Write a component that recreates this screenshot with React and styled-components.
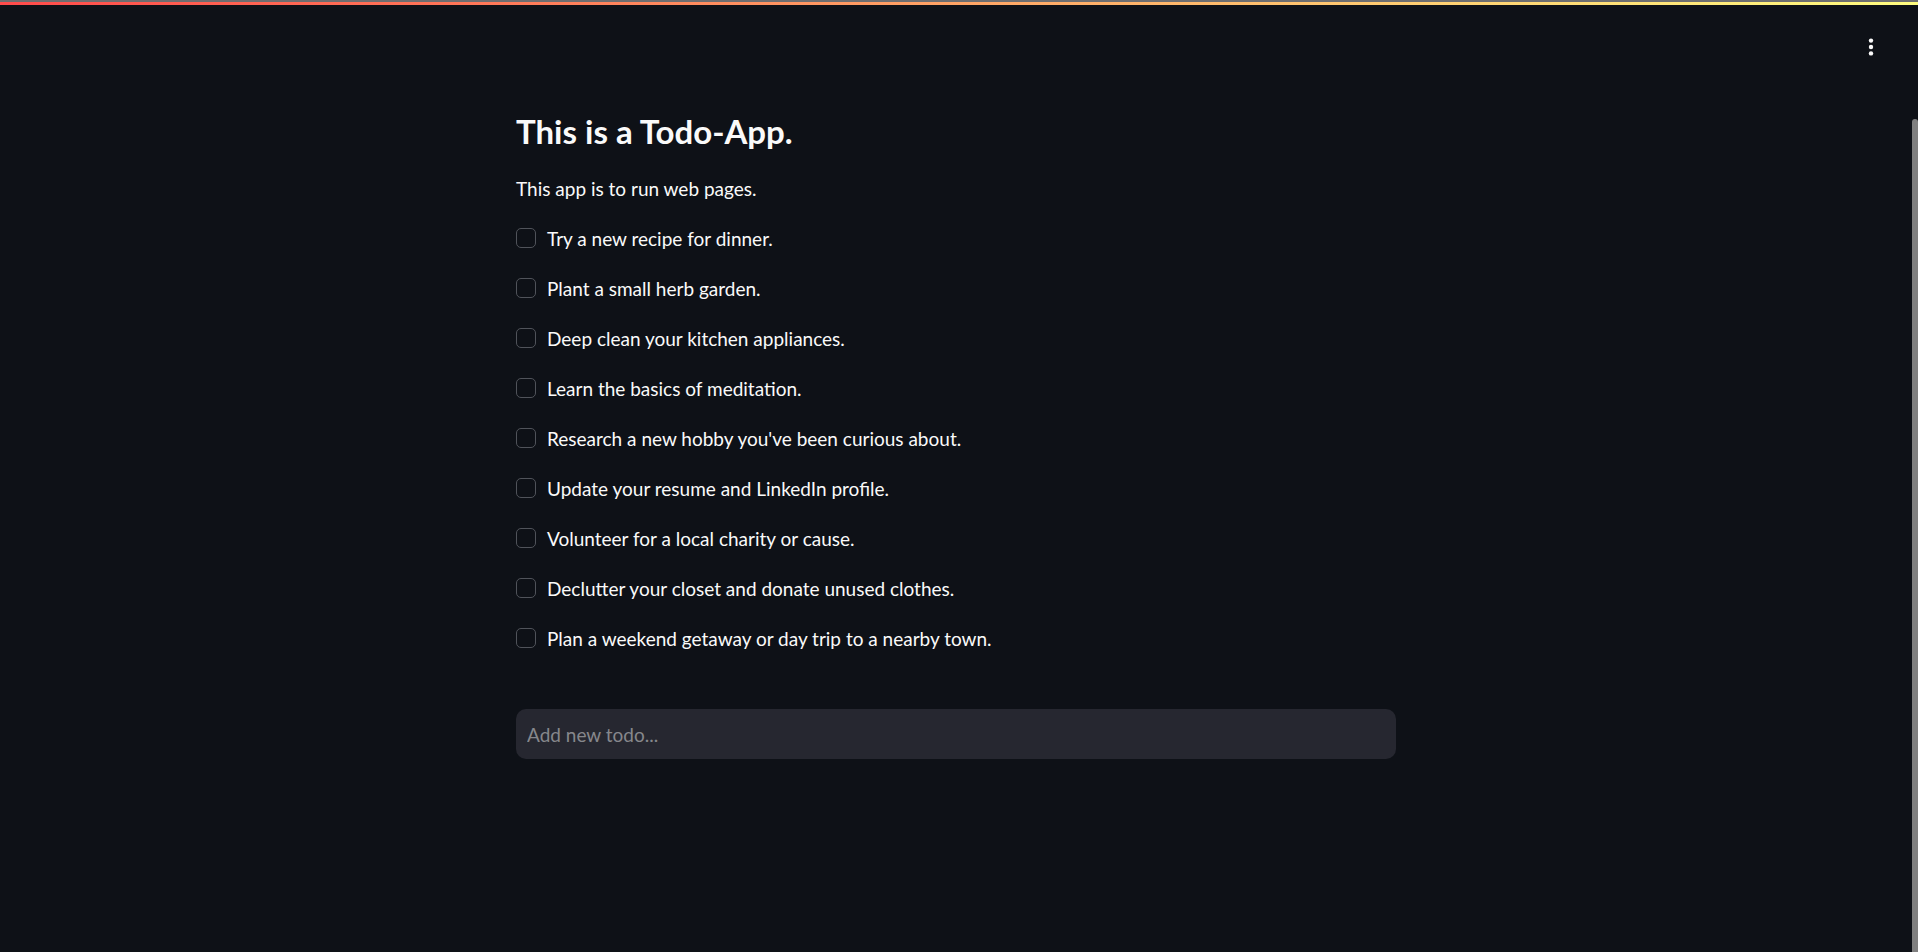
import styled, { createGlobalStyle } from 'styled-components';

const todos = [
	'Try a new recipe for dinner.',
	'Plant a small herb garden.',
	'Deep clean your kitchen appliances.',
	'Learn the basics of meditation.',
	"Research a new hobby you've been curious about.",
	'Update your resume and LinkedIn profile.',
	'Volunteer for a local charity or cause.',
	'Declutter your closet and donate unused clothes.',
	'Plan a weekend getaway or day trip to a nearby town.',
];

const GlobalStyle = createGlobalStyle`
	html, body {
		margin: 0;
		padding: 0;
		background: #0e1117;
	}

	body {
		font-family: Lato, "Noto Sans", sans-serif;
		color: #fafafa;
	}
`;

const Page = styled.div`
	display: flex;
	flex-direction: column;
	height: 100vh;
	overflow: hidden;
	background: #0e1117;
`;

const Decoration = styled.div`
	flex: none;
	height: 3px;
	border-top: 2px solid #6e6e70;
	background: linear-gradient(90deg, #ff4b4b, #fffd80);
`;

const Body = styled.div`
	display: flex;
	flex: 1;
	min-height: 0;
`;

const Content = styled.div`
	flex: 1;
	min-width: 0;
`;

const Header = styled.header`
	display: flex;
	justify-content: flex-end;
	padding: 22px 21px 0 0;
`;

const MenuButton = styled.button`
	display: flex;
	align-items: center;
	justify-content: center;
	width: 40px;
	height: 40px;
	padding: 0;
	border: none;
	background: transparent;
	color: #fafafa;
	cursor: pointer;
`;

const Main = styled.main`
	width: 880px;
	margin: 0 auto;
	padding-top: 43px;
`;

const Title = styled.h3`
	margin: 0;
	font-size: 33px;
	line-height: 42px;
	font-weight: 700;
`;

const Text = styled.p`
	margin: 22px 0 0;
	font-size: 19px;
	line-height: 30px;
`;

const List = styled.div`
	display: flex;
	flex-direction: column;
	gap: 20px;
	margin-top: 19px;
`;

const Row = styled.label`
	display: flex;
	align-items: center;
	gap: 11px;
	height: 30px;
	font-size: 19px;
	cursor: pointer;
`;

const Box = styled.span`
	width: 20px;
	height: 20px;
	box-sizing: border-box;
	border: 1px solid #50535a;
	border-radius: 5px;
	background: ${(p) => (p.checked ? '#ff4b4b' : 'transparent')};
`;

const Input = styled.input`
	display: block;
	width: 100%;
	height: 50px;
	margin-top: 56px;
	box-sizing: border-box;
	padding: 0 11px;
	border: none;
	border-radius: 10px;
	background: #262730;
	color: #fafafa;
	font-family: inherit;
	font-size: 19px;
	outline: none;

	&::placeholder {
		color: #86878c;
	}
`;

const ScrollTrack = styled.div`
	display: flex;
	flex: none;
	width: 6px;
	padding-top: 114px;
`;

const ScrollThumb = styled.div`
	flex: 1;
	border-radius: 3px 3px 0 0;
	background: #808080;
`;

const Dots = () => (
	<svg width="6" height="20" viewBox="0 0 6 20">
		<circle cx="3" cy="3.6" r="2.2" fill="currentColor" />
		<circle cx="3" cy="10" r="2.2" fill="currentColor" />
		<circle cx="3" cy="16.4" r="2.2" fill="currentColor" />
	</svg>
);

export default function App() {
	return (
		<Page>
			<GlobalStyle />
			<Decoration />
			<Body>
				<Content>
					<Header>
						<MenuButton aria-label="menu">
							<Dots />
						</MenuButton>
					</Header>
					<Main>
						<Title>This is a Todo-App.</Title>
						<Text>This app is to run web pages.</Text>
						<List>
							{todos.map((todo) => (
								<Row key={todo}>
									<Box />
									<span>{todo}</span>
								</Row>
							))}
						</List>
						<Input placeholder="Add new todo..." />
					</Main>
				</Content>
				<ScrollTrack>
					<ScrollThumb />
				</ScrollTrack>
			</Body>
		</Page>
	);
}
